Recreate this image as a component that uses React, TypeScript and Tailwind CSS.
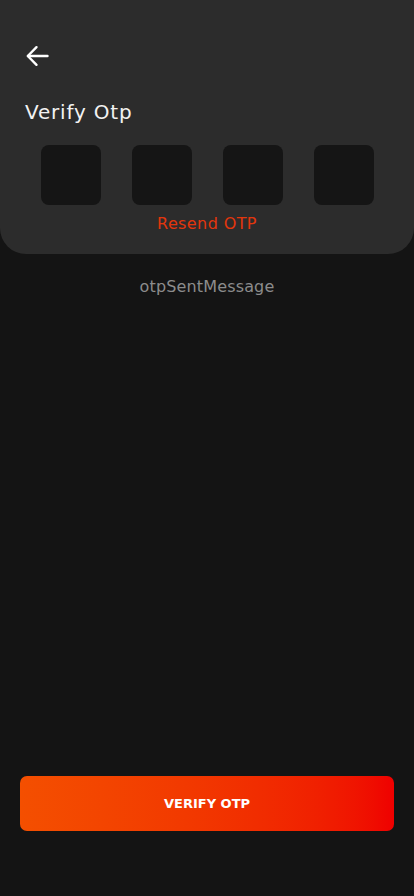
const FONT = { fontFamily: '"DejaVu Sans", "Noto Sans", sans-serif' };

function BackArrow() {
  return (
    <svg width="24" height="24" viewBox="0 0 24 24" fill="none" stroke="currentColor" strokeWidth="2.4" strokeLinecap="round" strokeLinejoin="round">
      <path d="M22.5 12H3" />
      <path d="M11.5 3.2L2.8 12l8.7 8.8" />
    </svg>
  );
}

function OtpBox() {
  return <div className="h-[60px] w-[60px] rounded-[8px] bg-[#151515]" />;
}

export default function App() {
  return (
    <div className="flex min-h-[896px] flex-col bg-[#141414]" style={FONT}>
      {/* Header card */}
      <div className="flex h-[254px] flex-col rounded-b-[26px] bg-[#2c2c2c] px-[25px]">
        <button className="mt-[44px] flex h-6 w-6 items-center text-white">
          <BackArrow />
        </button>
        <h1 className="mt-[30px] text-[20px] leading-[28px] tracking-[0.8px] text-[#f2f2f2]">Verify Otp</h1>
        <div className="mt-[19px] flex justify-around">
          <OtpBox />
          <OtpBox />
          <OtpBox />
          <OtpBox />
        </div>
        <p className="mt-[8px] text-center text-[16px] leading-[22px] tracking-[0.4px] text-[#e3360c]">Resend OTP</p>
      </div>

      <p className="mt-[22px] text-center text-[16px] leading-[22px] tracking-[0.15px] text-[#8c8c8c]">otpSentMessage</p>

      <div className="flex-1" />

      <div className="px-5 pb-[65px]">
        <button className="flex h-[55px] w-full items-center justify-center rounded-[7px] bg-gradient-to-r from-[#f44f00] to-[#ef0000] text-[13px] font-bold text-white">
          VERIFY OTP
        </button>
      </div>
    </div>
  );
}
